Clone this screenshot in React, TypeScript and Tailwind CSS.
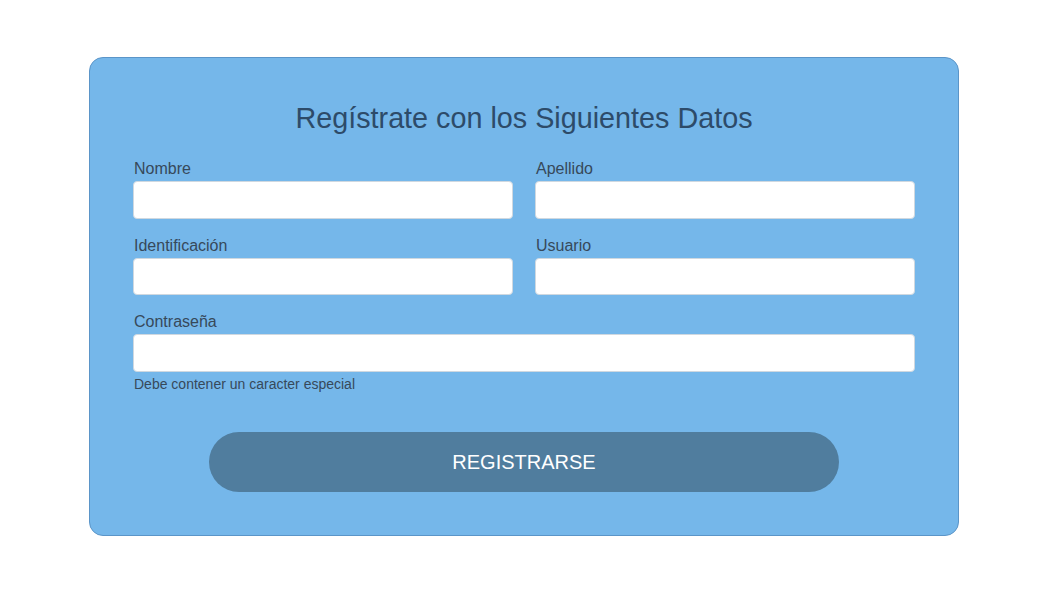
import React from "react";

function Field({ label }: { label: string }) {
  return (
    <div className="flex flex-col">
      <label className="block text-[16px] leading-[22px] text-[#37495a] pl-[1px]">{label}</label>
      <input className="mt-[1px] h-[37.5px] w-full rounded-[4px] border border-[#cfd8e0] bg-white outline-none" />
    </div>
  );
}

export default function App() {
  return (
    <div className="min-h-[591px] w-full bg-white" style={{ fontFamily: '"Liberation Sans", Arial, sans-serif' }}>
      <div className="pt-[57px] pl-[89px]">
        <div className="w-[870px] h-[479px] rounded-[14px] border border-[#5b95c8] bg-[#75b7ea] px-[43px] pt-[44px]">
          <h1 className="text-center text-[28.75px] leading-[32px] text-[#2d4b69]">Regístrate con los Siguientes Datos</h1>
          <div className="mt-[24px] grid grid-cols-2 gap-x-[22px] gap-y-[16px]">
            <Field label="Nombre" />
            <Field label="Apellido" />
            <Field label="Identificación" />
            <Field label="Usuario" />
            <div className="col-span-2">
              <Field label="Contraseña" />
              <p className="mt-[4px] pl-[1px] text-[14px] leading-[16px] text-[#37495a]">Debe contener un caracter especial</p>
            </div>
          </div>
          <div className="mt-[40.5px] flex justify-center">
            <button className="h-[60px] w-[630px] rounded-full bg-[#507d9e] text-[20px] text-white">REGISTRARSE</button>
          </div>
        </div>
      </div>
    </div>
  );
}
